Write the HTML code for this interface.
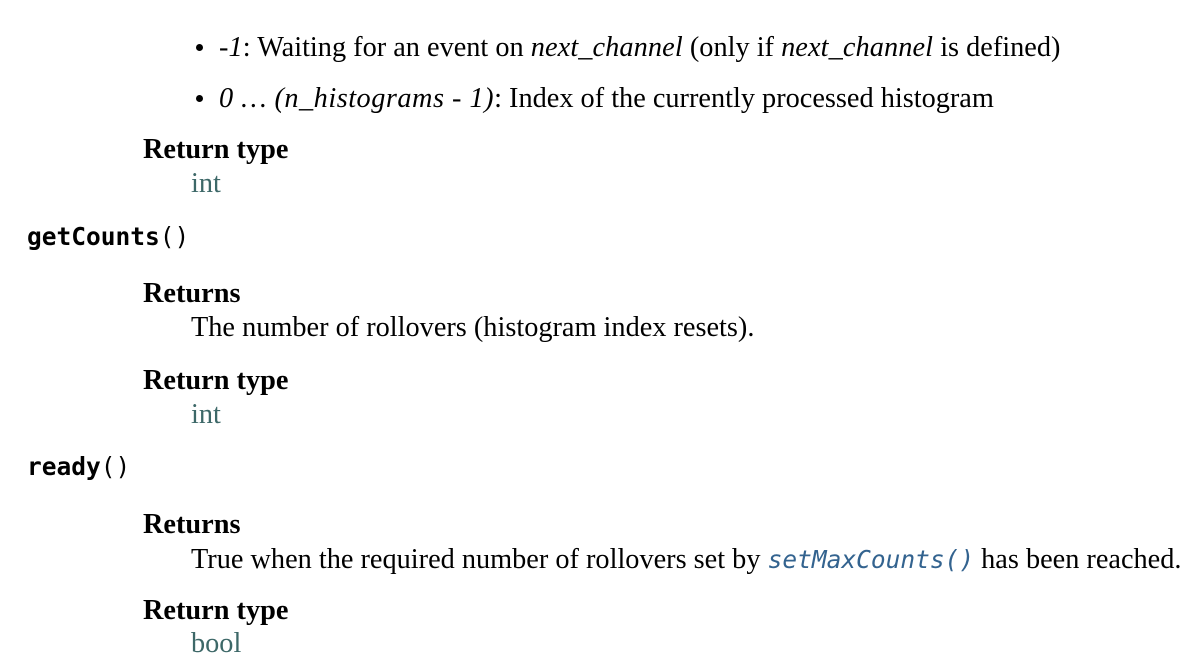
<!DOCTYPE html>
<html><head><meta charset="utf-8"><style>
body{margin:0;width:1189px;height:653px;background:#fff;position:relative;overflow:hidden;font-family:"Liberation Serif",serif;font-size:28.3px;color:#000}
.l{position:absolute;white-space:nowrap;line-height:32px}
b{font-weight:bold}
i{letter-spacing:0.1px}
i.w{letter-spacing:0.5px}
.t{color:#3d6868}
.m{font-family:"DejaVu Sans Mono",monospace;font-size:24.5px}
.c{color:#33638f;font-style:italic}
.dot{position:absolute;width:7px;height:7px;border-radius:50%;background:#000}
</style></head><body>
<span class="dot" style="left:196px;top:44px"></span>
<div class="l" style="left:219px;top:32px"><i>-1</i>: Waiting for an event on <i>next_channel</i> (only if <i>next_channel</i> is defined)</div>
<span class="dot" style="left:196px;top:95px"></span>
<div class="l" style="left:219px;top:83px"><i class="w">0 …  (n_histograms - 1)</i>: Index of the currently processed histogram</div>
<div class="l" style="left:143px;top:134px"><b>Return type</b></div>
<div class="l t" style="left:191px;top:168px">int</div>
<div class="l m" style="left:27px;top:221px"><b>getCounts</b>()</div>
<div class="l" style="left:143px;top:278px"><b>Returns</b></div>
<div class="l" style="left:191px;top:312px">The number of rollovers (histogram index resets).</div>
<div class="l" style="left:143px;top:365px"><b>Return type</b></div>
<div class="l t" style="left:191px;top:399px">int</div>
<div class="l m" style="left:27px;top:451px"><b>ready</b>()</div>
<div class="l" style="left:143px;top:509px"><b>Returns</b></div>
<div class="l" style="left:191px;top:544px">True when the required number of rollovers set by <span class="m c">setMaxCounts()</span> has been reached.</div>
<div class="l" style="left:143px;top:595px"><b>Return type</b></div>
<div class="l t" style="left:191px;top:628px">bool</div>
</body></html>
